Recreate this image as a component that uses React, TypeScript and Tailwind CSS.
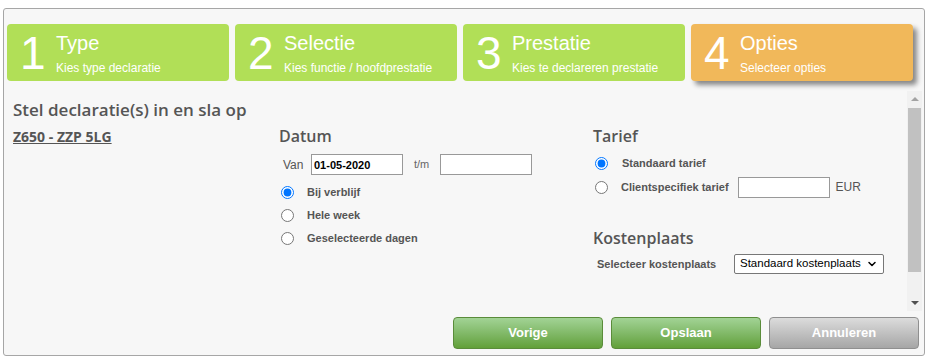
import { ChevronDown } from 'lucide-react';

const steps = [
  { n: '1', title: 'Type', sub: 'Kies type declaratie', active: false },
  { n: '2', title: 'Selectie', sub: 'Kies functie / hoofdprestatie', active: false },
  { n: '3', title: 'Prestatie', sub: 'Kies te declareren prestatie', active: false },
  { n: '4', title: 'Opties', sub: 'Selecteer opties', active: true },
];

const heading = "font-['Open_Sans',sans-serif] font-semibold text-[#555]";
const label = "font-['Liberation_Sans',Arial,sans-serif] text-[11px] font-bold text-[#555]";

const Radio = ({ checked, name }: { checked?: boolean; name: string }) => (
  <input type="radio" name={name} defaultChecked={checked} className="m-0 h-[13px] w-[13px] accent-[#0075ff]" />
);

export default function App() {
  return (
    <div className="h-[361px] w-[930px] bg-white pt-2 pl-[3px] font-['Liberation_Sans',Arial,sans-serif]">
      <div className="flex h-[348px] w-[922px] flex-col rounded-[3px] border border-[#a6a6a6] bg-[#f7f7f7]">
        {/* steps */}
        <div className="flex gap-[6px] pl-[3px] pt-[15px]">
          {steps.map((s) => (
            <div
              key={s.n}
              className={
                s.active
                  ? 'flex h-[57px] w-[222px] rounded-[4px] bg-[#f1b85a] text-white shadow-[4px_4px_5px_rgba(0,0,0,0.45)]'
                  : 'flex h-[57px] w-[222px] rounded-[4px] bg-[#b1df57] text-white'
              }
            >
              <div className="w-[49px] pt-[4px] pl-[13px] text-[46px] font-light leading-[50px]">{s.n}</div>
              <div className="flex flex-col pt-[8px]">
                <span className="text-[20px] leading-[22px]">{s.title}</span>
                <span className="mt-[7px] text-[12px] leading-[14px]">{s.sub}</span>
              </div>
            </div>
          ))}
        </div>

        {/* scrollable content */}
        <div className="mt-[10px] flex h-[220px]">
          <div className="flex-1 pl-[9px] pt-[7px]">
            <h2 className={`${heading} text-[17px] leading-[24px]`}>Stel declaratie(s) in en sla op</h2>
            <div className="mt-[3px] flex">
              <div className="w-[266px]">
                <a className="font-['Open_Sans',sans-serif] text-[14px] font-bold leading-[18px] text-[#555] underline">
                  Z650 - ZZP 5LG
                </a>
              </div>

              <div className="w-[314px]">
                <h3 className={`${heading} text-[16px] leading-[22px]`}>Datum</h3>
                <div className="mt-[7px] flex items-center">
                  <span className="ml-[4px] w-[28px] text-[12px] text-[#555]">Van</span>
                  <input
                    defaultValue="01-05-2020"
                    className="h-[21px] w-[92px] border border-[#999] bg-white px-[2px] text-[11px] font-bold text-black outline-none"
                  />
                  <span className="ml-[11px] w-[26px] text-[11px] text-[#666]">t/m</span>
                  <input className="h-[21px] w-[92px] border border-[#999] bg-white outline-none" />
                </div>
                <div className="mt-[6px] flex flex-col">
                  {[
                    ['Bij verblijf', true],
                    ['Hele week', false],
                    ['Geselecteerde dagen', false],
                  ].map(([t, c]) => (
                    <label key={t as string} className="flex h-[23px] items-center pl-[2px]">
                      <Radio name="datum" checked={c as boolean} />
                      <span className={`${label} ml-[13px]`}>{t}</span>
                    </label>
                  ))}
                </div>
              </div>

              <div className="flex-1">
                <h3 className={`${heading} text-[16px] leading-[22px]`}>Tarief</h3>
                <label className="mt-[5px] flex h-[22px] items-center pl-[2px]">
                  <Radio name="tarief" checked />
                  <span className={`${label} ml-[14px]`}>Standaard tarief</span>
                </label>
                <div className="flex h-[26px] items-center pl-[2px]">
                  <Radio name="tarief" />
                  <span className={`${label} ml-[13px]`}>Clientspecifiek tarief</span>
                  <input className="ml-[9px] h-[21px] w-[92px] border border-[#999] bg-white outline-none" />
                  <span className="ml-[6px] text-[12px] text-[#555]">EUR</span>
                </div>
                <h3 className={`${heading} mt-[27px] text-[16px] leading-[22px]`}>Kostenplaats</h3>
                <div className="mt-[5px] flex items-center pl-[4px]">
                  <span className={`${label} w-[137px]`}>Selecteer kostenplaats</span>
                  <div className="flex h-[20px] w-[150px] items-center justify-between whitespace-nowrap rounded-[2px] border border-[#777] bg-white pl-[5px] pr-[5px] text-[11.5px] leading-none text-black">
                    Standaard kostenplaats
                    <ChevronDown size={12} strokeWidth={3} className="shrink-0" />
                  </div>
                </div>
              </div>
            </div>
          </div>

          {/* scrollbar */}
          <div className="mr-[2px] flex w-[15px] flex-col items-center bg-[#f1f1f1]">
            <div className="mt-[6px] h-0 w-0 border-x-[4px] border-b-[4px] border-x-transparent border-b-[#a3a3a3]" />
            <div className="mt-[7px] h-[164px] w-[13px] bg-[#c1c1c1]" />
            <div className="mt-auto mb-[6px] h-0 w-0 border-x-[4px] border-t-[4px] border-x-transparent border-t-[#505050]" />
          </div>
        </div>

        {/* buttons */}
        <div className="mt-[6px] flex justify-end gap-[8px] pr-[5px]">
          <button className="h-[32px] w-[150px] rounded-[4px] border border-[#5a8c3a] bg-gradient-to-b from-[#a2d395] to-[#62a038] text-[13px] font-bold text-white">
            Vorige
          </button>
          <button className="h-[32px] w-[150px] rounded-[4px] border border-[#5a8c3a] bg-gradient-to-b from-[#a2d395] to-[#62a038] text-[13px] font-bold text-white">
            Opslaan
          </button>
          <button className="h-[32px] w-[150px] rounded-[4px] border border-[#8f8f8f] bg-gradient-to-b from-[#dcdcdc] to-[#a6a6a6] text-[13px] font-bold text-white">
            Annuleren
          </button>
        </div>
      </div>
    </div>
  );
}
